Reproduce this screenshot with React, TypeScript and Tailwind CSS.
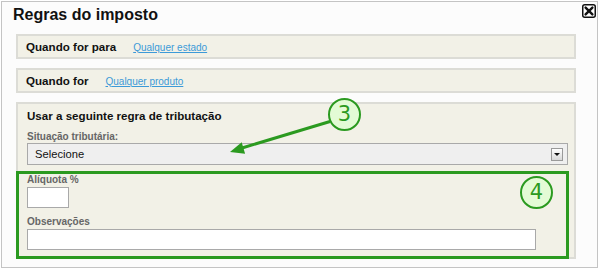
const fields = [
  { label: 'Quando for para', link: 'Qualquer estado' },
  { label: 'Quando for', link: 'Qualquer produto' },
];

function Callout({ n, className }: { n: string; className: string }) {
  return (
    <div
      className={`absolute w-[33px] h-[33px] rounded-full border-[2.5px] border-[#2b9a20] bg-[#e3fbd5] flex items-center justify-center text-[21px] leading-none text-[#2b9a20] font-['DejaVu_Sans',sans-serif] ${className}`}
    >
      {n}
    </div>
  );
}

export default function App() {
  return (
    <div className="relative w-[600px] h-[272px] bg-white pt-[1px] pl-[1px] font-['Liberation_Sans',Arial,sans-serif] text-[#111]">
      <div className="relative w-[597px] h-[267px] border border-[#c4c4c4] bg-[#fcfcfc]">
        <h1 className="ml-[11px] mt-[4px] text-[16px] leading-[18px] font-bold">Regras do imposto</h1>

        {/* close button */}
        <div className="absolute left-[580px] top-[2px] w-[14px] h-[14px]">
          <svg width="14" height="14" viewBox="0 0 14 14">
            <rect x="0.75" y="0.75" width="12.5" height="12.5" rx="2" fill="#fff" stroke="#111" strokeWidth="1.5" />
            <path d="M3.6 3.6 L10.4 10.4 M10.4 3.6 L3.6 10.4" stroke="#111" strokeWidth="2.4" strokeLinecap="round" />
          </svg>
        </div>

        <div className="ml-[14px] mt-[10px] w-[560px] flex flex-col gap-[9px]">
          {fields.map((f) => (
            <div
              key={f.label}
              className="h-[25px] border-2 border-[#dcdcd6] bg-[#f2f1e7] flex items-center gap-[17px] pl-[8px] pt-[1px]"
            >
              <span className="text-[11.6px] font-bold">{f.label}</span>
              <a className="text-[10px] text-[#3c9ad8] underline">{f.link}</a>
            </div>
          ))}

          <div className="border-2 border-[#dcdcd6] bg-[#f2f1e7]">
            <div className="px-[9px] pt-[5px]">
              <div className="text-[11.6px] leading-[14px] font-bold">Usar a seguinte regra de tributação</div>
              <div className="mt-[8px] text-[10px] leading-[12px] font-bold text-[#666]">Situação tributária:</div>
              <div className="w-[541px] h-[22px] border border-[#a9a9a9] bg-[#efefef] flex items-center justify-between pl-[7px] pr-[4px]">
                <span className="text-[11.2px]">Selecione</span>
                <div className="w-[12px] h-[13px] border border-[#9a9a9a] bg-gradient-to-b from-white to-[#d8d8d8] flex items-center justify-center">
                  <svg width="6" height="5" viewBox="0 0 6 5">
                    <path d="M0 1 L6 1 L3 4 Z" fill="#111" />
                  </svg>
                </div>
              </div>
            </div>

            <div className="mt-[6px] -ml-[2px] -mb-[2px] w-[553px] border-[3px] border-[#2b9a20] pl-[8px] pb-[6px]">
              <div className="text-[10px] leading-[12px] font-bold text-[#666]">Alíquota %</div>
              <div className="mt-[1px] w-[42px] h-[21px] border border-[#a9a9a9] bg-white" />
              <div className="mt-[8px] text-[10px] leading-[12px] font-bold text-[#666]">Observações</div>
              <div className="mt-[1px] w-[509px] h-[21px] border border-[#a9a9a9] bg-white" />
            </div>
          </div>
        </div>
      </div>

      {/* annotation arrow */}
      <svg className="absolute left-0 top-0 pointer-events-none" width="600" height="272">
        <line x1="330" y1="121.5" x2="242" y2="148" stroke="#2b9a20" strokeWidth="3" />
        <polygon points="230,152 241.7,142.3 245.1,153.8" fill="#2b9a20" />
      </svg>

      <Callout n="3" className="left-[328px] top-[98px]" />
      <Callout n="4" className="left-[520px] top-[176px]" />
    </div>
  );
}
